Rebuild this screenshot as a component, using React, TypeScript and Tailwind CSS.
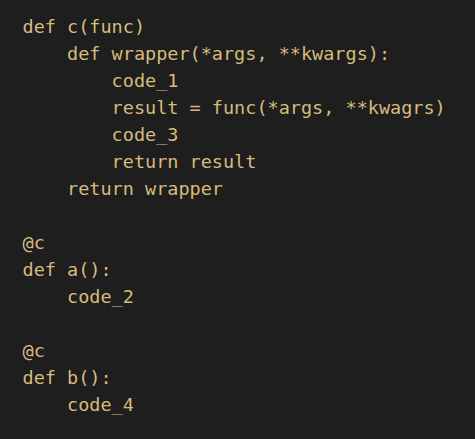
const lines = [
  "def c(func)",
  "    def wrapper(*args, **kwargs):",
  "        code_1",
  "        result = func(*args, **kwagrs)",
  "        code_3",
  "        return result",
  "    return wrapper",
  "",
  "@c",
  "def a():",
  "    code_2",
  "",
  "@c",
  "def b():",
  "    code_4",
];

export default function App() {
  return (
    <div className="w-[475px] h-[439px] bg-[#1e1e1e] pl-[22.5px] pt-[12.5px] overflow-hidden">
      <pre className="font-['DejaVu_Sans_Mono',monospace] text-[18.5px] leading-[27px] text-[#d7ba7d] m-0">
        {lines.map((l, i) => (
          <div key={i} className="h-[27px] whitespace-pre">{l || " "}</div>
        ))}
      </pre>
    </div>
  );
}
